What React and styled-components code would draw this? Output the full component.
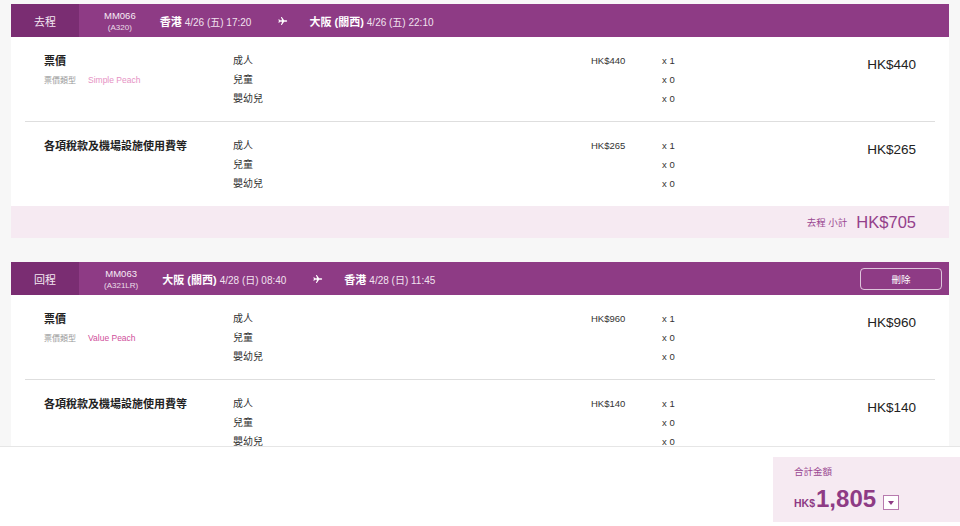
import React from 'react';
import styled, { createGlobalStyle } from 'styled-components';

const PURPLE = '#8e3b85';
const PURPLE_DARK = '#7a2d72';
const PINK_BG = '#f6eaf2';
const SUB_TEXT = '#9a4791';

const GlobalStyle = createGlobalStyle`
  html, body {
    margin: 0;
    padding: 0;
    background: #f7f7f7;
  }
  body {
    font-family: "Liberation Sans", "Noto Sans CJK TC", sans-serif;
    color: #222;
  }
`;

const Page = styled.div`
  display: flex;
  flex-direction: column;
  height: 526px;
  overflow: hidden;
`;

const Main = styled.div`
  display: flex;
  flex: 1;
  flex-direction: column;
  gap: 24px;
  min-height: 0;
  overflow: hidden;
  padding: 4px 11px 0;
`;

const Card = styled.section`
  background: #fff;
  flex-shrink: 0;
`;

const Header = styled.div`
  align-items: center;
  background: ${PURPLE};
  color: #fff;
  display: flex;
  height: 33px;
`;

const Tab = styled.div`
  align-items: center;
  align-self: stretch;
  background: ${PURPLE_DARK};
  color: #f3e6f1;
  display: flex;
  font-size: 11px;
  justify-content: center;
  width: 68px;
`;

const Flight = styled.div`
  color: #f6ecf5;
  font-size: 9.5px;
  font-weight: 400;
  line-height: 11px;
  padding: 1px 24px 0 25px;
  text-align: center;
`;

const Aircraft = styled.div`
  font-size: 8px;
  margin-top: 1px;
  opacity: 0.9;
`;

const Place = styled.span`
  font-size: 11px;
  font-weight: 700;
  white-space: nowrap;
`;

const When = styled.span`
  color: #f1e2ef;
  font-size: 10px;
  font-weight: 400;
  margin-left: 3px;
`;

const PlaneIcon = styled.svg`
  fill: #fff;
  height: 10px;
  margin: 0 21px 0 27px;
  width: 10px;
`;

const DeleteButton = styled.button`
  background: transparent;
  border: 1px solid rgba(255, 255, 255, 0.7);
  border-radius: 4px;
  color: #fff;
  font-family: inherit;
  font-size: 9.5px;
  height: 22px;
  margin-left: auto;
  margin-right: 7px;
  width: 82px;
`;

const Section = styled.div`
  border-bottom: ${(p) => (p.last ? 'none' : '1px solid #dedede')};
  display: grid;
  grid-template-columns: 189px 358px 71px 1fr auto;
  margin: 0 14px;
  padding: 14px 19px 13px;
`;

const Title = styled.div`
  font-size: 11px;
  font-weight: 700;
  line-height: 20px;
`;

const FareType = styled.div`
  color: #999;
  font-size: 8px;
  line-height: 18px;
`;

const FareName = styled.span`
  color: ${(p) => p.tone};
  font-size: 8.5px;
  margin-left: 12px;
`;

const Stack = styled.div`
  display: flex;
  flex-direction: column;
`;

const Cell = styled.div`
  color: #333;
  font-size: ${(p) => p.size || '9.5px'};
  height: 19px;
  line-height: 19px;
`;

const Amount = styled.div`
  font-size: 13.5px;
  line-height: 27px;
  text-align: right;
`;

const Subtotal = styled.div`
  align-items: center;
  background: ${PINK_BG};
  display: flex;
  gap: 9px;
  height: 32px;
  justify-content: flex-end;
  padding-right: 33px;
`;

const SubLabel = styled.span`
  color: ${SUB_TEXT};
  font-size: 9.5px;
`;

const SubAmount = styled.span`
  color: #94408b;
  font-size: 16.5px;
`;

const Footer = styled.footer`
  align-items: flex-start;
  background: #fff;
  border-top: 1px solid #e6e6e6;
  box-sizing: border-box;
  display: flex;
  flex-shrink: 0;
  height: 80px;
  justify-content: flex-end;
  padding-top: 10px;
`;

const TotalBox = styled.div`
  background: ${PINK_BG};
  box-sizing: border-box;
  display: flex;
  flex-direction: column;
  padding: 8px 0 5px 21px;
  width: 187px;
`;

const TotalLabel = styled.div`
  color: ${SUB_TEXT};
  font-size: 9.5px;
  line-height: 14px;
`;

const TotalRow = styled.div`
  align-items: baseline;
  color: ${PURPLE};
  display: flex;
  line-height: 28px;
  margin-top: 6px;
`;

const Currency = styled.span`
  font-size: 10.5px;
  font-weight: 700;
  margin-right: 1px;
`;

const Big = styled.span`
  font-size: 24px;
  font-weight: 700;
`;

const Toggle = styled.span`
  align-items: center;
  align-self: center;
  background: #fff;
  border: 1px solid #b77aae;
  box-sizing: border-box;
  display: inline-flex;
  height: 15px;
  justify-content: center;
  margin-left: 7px;
  margin-top: 3px;
  width: 16px;

  &::after {
    border-left: 3.5px solid transparent;
    border-right: 3.5px solid transparent;
    border-top: 4px solid ${PURPLE};
    content: '';
  }
`;

const Plane = () => (
  <PlaneIcon viewBox="0 0 24 24">
    <path d="M22 12c0-.9-.7-1.6-1.6-1.6H14.6L9.2 2.5H7l2.8 7.9H4.6L2.8 7.8H1l1.1 4.2L1 16.2h1.8l1.8-2.6h5.2L7 21.5h2.2l5.4-7.9h5.8c.9 0 1.6-.7 1.6-1.6z" />
  </PlaneIcon>
);

const LABELS = ['成人', '兒童', '嬰幼兒'];

const FareRow = ({ title, fareName, fareTone, price, total, last }) => (
  <Section last={last}>
    <div>
      <Title>{title}</Title>
      {fareName && (
        <FareType>
          票價類型
          <FareName tone={fareTone}>{fareName}</FareName>
        </FareType>
      )}
    </div>
    <Stack>
      {LABELS.map((l) => (
        <Cell key={l} size="10px">{l}</Cell>
      ))}
    </Stack>
    <Stack>
      <Cell>{price}</Cell>
    </Stack>
    <Stack>
      <Cell>x 1</Cell>
      <Cell>x 0</Cell>
      <Cell>x 0</Cell>
    </Stack>
    <Amount>{total}</Amount>
  </Section>
);

const Leg = ({ leg }) => (
  <Card>
    <Header>
      <Tab>{leg.tab}</Tab>
      <Flight>
        {leg.flight}
        <Aircraft>{leg.aircraft}</Aircraft>
      </Flight>
      <Place>
        {leg.from}
        <When>{leg.fromTime}</When>
      </Place>
      <Plane />
      <Place>
        {leg.to}
        <When>{leg.toTime}</When>
      </Place>
      {leg.removable && <DeleteButton>刪除</DeleteButton>}
    </Header>
    <FareRow
      title="票價"
      fareName={leg.fareName}
      fareTone={leg.fareTone}
      price={leg.fare}
      total={leg.fare}
    />
    <FareRow
      title="各項稅款及機場設施使用費等"
      price={leg.tax}
      total={leg.tax}
      last
    />
    <Subtotal>
      <SubLabel>{leg.tab} 小計</SubLabel>
      <SubAmount>{leg.subtotal}</SubAmount>
    </Subtotal>
  </Card>
);

const LEGS = [
  {
    tab: '去程',
    flight: 'MM066',
    aircraft: '(A320)',
    from: '香港',
    fromTime: '4/26 (五) 17:20',
    to: '大阪 (關西)',
    toTime: '4/26 (五) 22:10',
    fareName: 'Simple Peach',
    fareTone: '#e692c4',
    fare: 'HK$440',
    tax: 'HK$265',
    subtotal: 'HK$705',
  },
  {
    tab: '回程',
    flight: 'MM063',
    aircraft: '(A321LR)',
    from: '大阪 (關西)',
    fromTime: '4/28 (日) 08:40',
    to: '香港',
    toTime: '4/28 (日) 11:45',
    fareName: 'Value Peach',
    fareTone: '#cf4f9c',
    fare: 'HK$960',
    tax: 'HK$140',
    subtotal: 'HK$1,100',
    removable: true,
  },
];

const App = () => (
  <Page>
    <GlobalStyle />
    <Main>
      {LEGS.map((leg) => (
        <Leg key={leg.flight} leg={leg} />
      ))}
    </Main>
    <Footer>
      <TotalBox>
        <TotalLabel>合計金額</TotalLabel>
        <TotalRow>
          <Currency>HK$</Currency>
          <Big>1,805</Big>
          <Toggle />
        </TotalRow>
      </TotalBox>
    </Footer>
  </Page>
);

export default App;
